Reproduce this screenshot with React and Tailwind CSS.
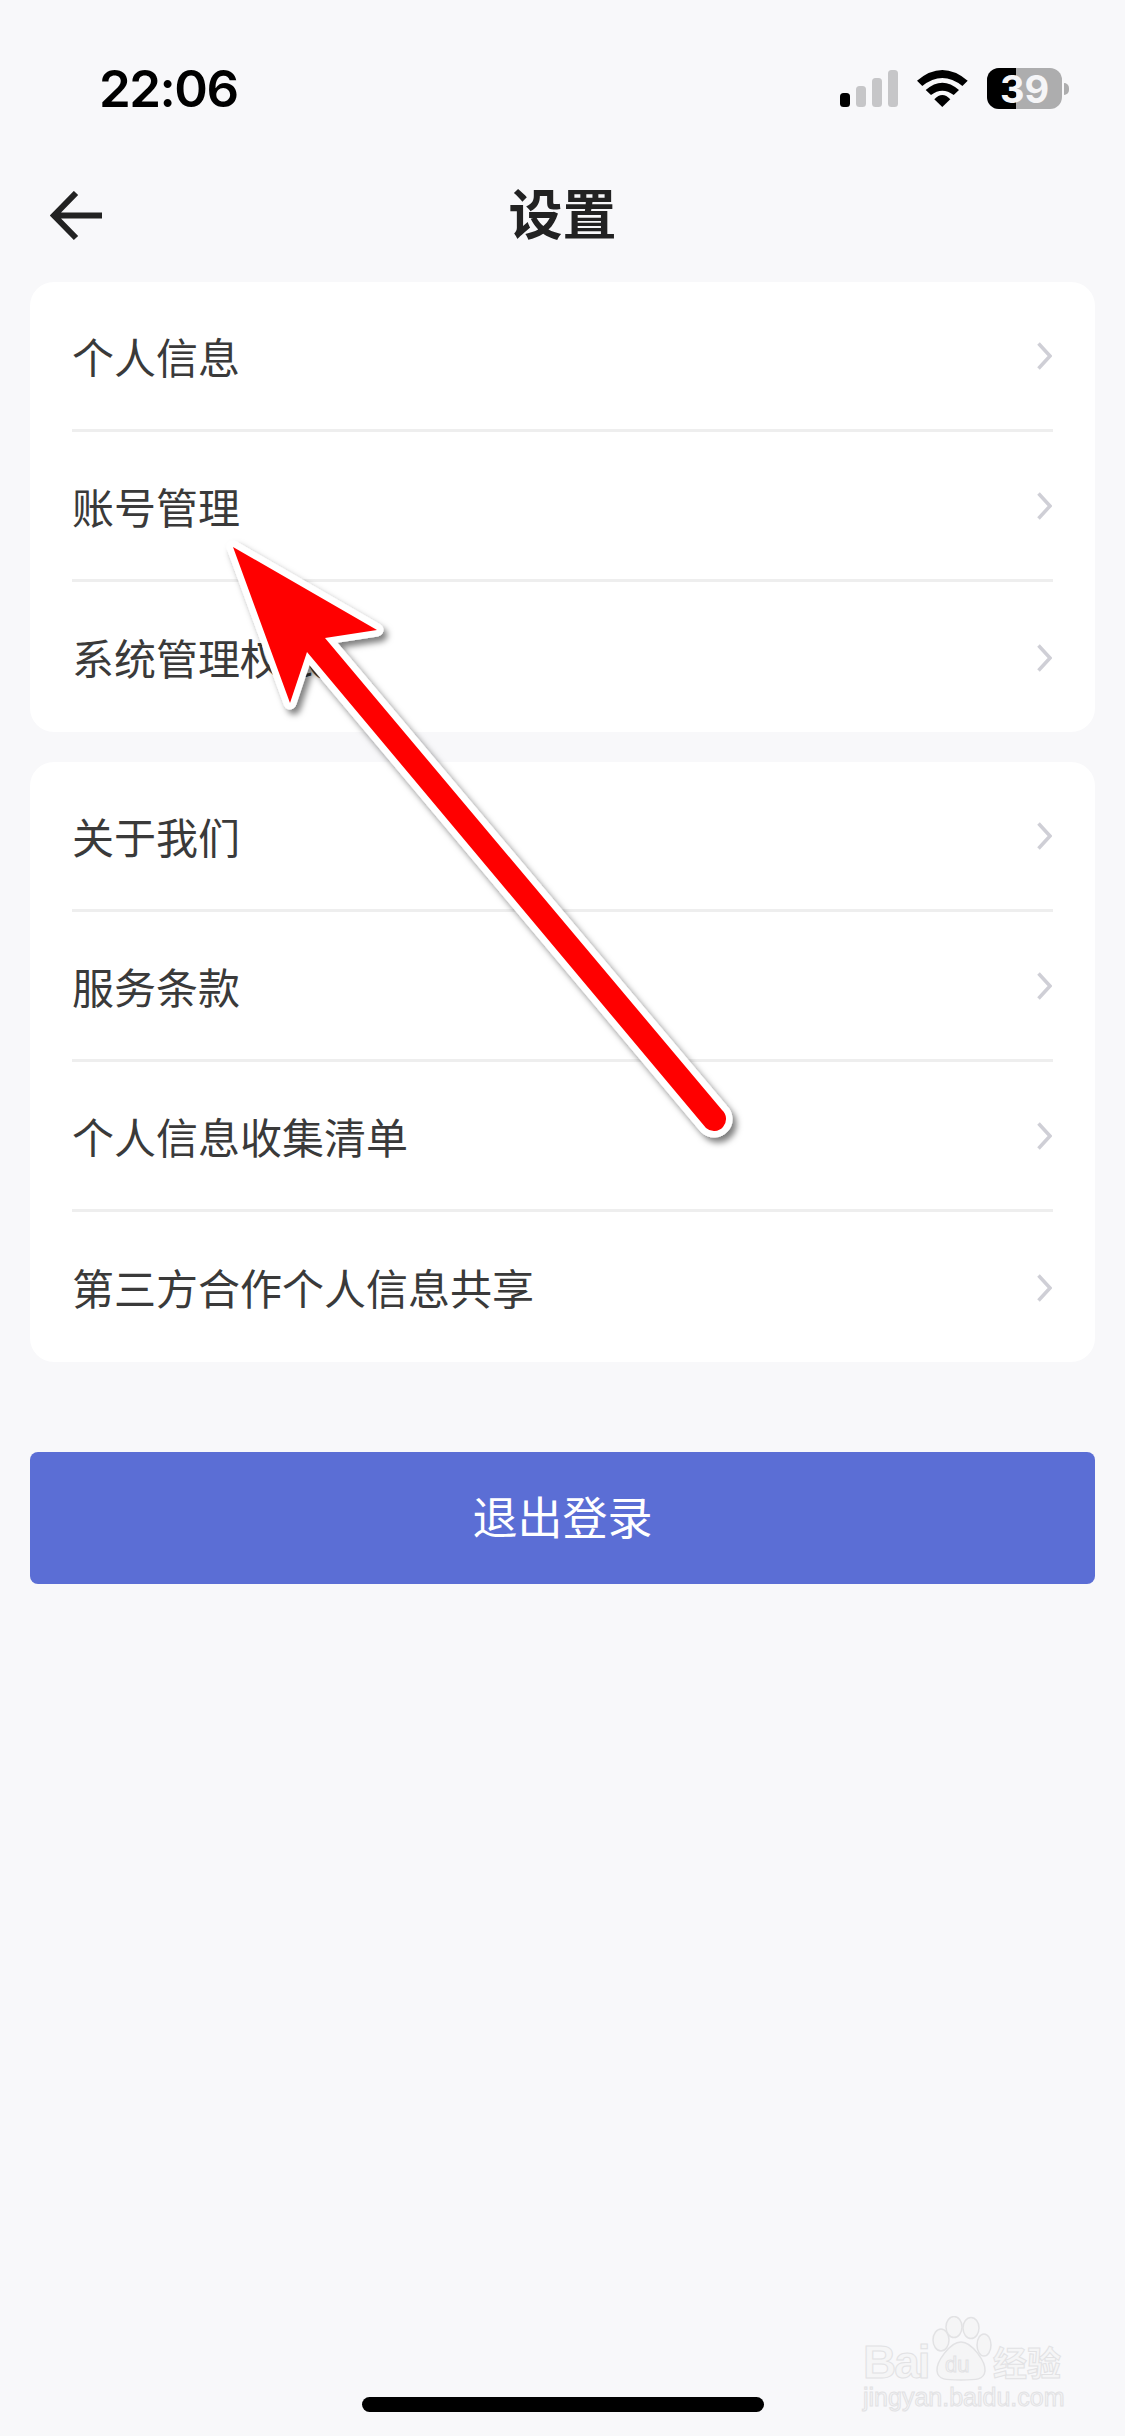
import React from "react";

const cjk = "font-['Noto_Sans_CJK_SC','Noto_Sans',sans-serif]";
const arrowPath = "M233 547 L377 630 L325 638 L722 1110 A11 11 0 0 1 706 1128 L307 652 L290 703 Z";

function Row({ label, last }) {
  return (
    <div className={"h-[150px] flex items-center justify-between " + (last ? "" : "border-b-[3px] border-[#eeeeee]")}>
      <span className="text-[42px] leading-none text-[#3a3a3a]">{label}</span>
      <svg className="mt-[1px] mr-[1px]" width="15" height="28" viewBox="0 0 15 28">
        <path d="M1.500 1.500 L13 14 L1.500 26.500" fill="none" stroke="#cfcfd6" strokeWidth="3.500" />
      </svg>
    </div>
  );
}

function Card({ items }) {
  return (
    <div className="bg-white rounded-[24px] px-[42px]">
      {items.map((t, i) => (
        <Row key={t} label={t} last={i === items.length - 1} />
      ))}
    </div>
  );
}

function StatusIcons() {
  return (
    <div className="flex items-center gap-[19px]">
      <svg width="58" height="37" viewBox="0 0 58 37">
        <rect x="0" y="23" width="10" height="14" rx="3.500" fill="#000" />
        <rect x="16" y="16" width="10" height="21" rx="3.500" fill="#c6c6c8" />
        <rect x="32" y="8" width="10" height="29" rx="3.500" fill="#c6c6c8" />
        <rect x="48" y="0" width="10" height="37" rx="3.500" fill="#c6c6c8" />
      </svg>
      <svg width="51" height="37" viewBox="0 0 51 37">
        <path d="M0 10.700 Q25.300 -10.700 50.700 10.700 L45.400 16 Q25.300 0 5.300 16 Z" fill="#000" />
        <path d="M8.700 20 Q25.300 5.300 42 20 L36.700 25 Q25.300 16.300 14 25 Z" fill="#000" />
        <path d="M17.300 29.300 Q25.300 20.700 33.300 29.300 L25.300 37 Z" fill="#000" />
      </svg>
      <div className="flex items-center gap-[2px]">
        <div className="relative w-[75px] h-[41px] rounded-[12px] bg-[#adadae]">
          <div className="w-[29px] h-full rounded-l-[12px] bg-black" />
          <span className="absolute inset-0 flex items-center justify-center text-[38px] font-bold leading-none text-[#f5f5f7] font-['Inter',sans-serif]">39</span>
        </div>
        <div className="w-[5px] h-[12px] rounded-r-full bg-[#adadae]" />
      </div>
    </div>
  );
}

// Annotation arrow laid over the settings list
function Arrow() {
  return (
    <svg className="absolute left-0 top-0 pointer-events-none" width="1125" height="1200" viewBox="0 0 1125 1200">
      <defs>
        <filter id="arrowShadow" x="-10%" y="-10%" width="130%" height="130%">
          <feDropShadow dx="4" dy="5" stdDeviation="3" floodColor="#000" floodOpacity="0.5" />
        </filter>
      </defs>
      <path d={arrowPath} fill="#ff0000" stroke="#ffffff" strokeWidth="13" strokeLinejoin="round" filter="url(#arrowShadow)" />
      <path d={arrowPath} fill="#ff0000" />
    </svg>
  );
}

function Watermark() {
  const outline = "[-webkit-text-stroke:1px_#e2e2e4] text-[#f5f5f6]";
  return (
    <div className="absolute left-[863px] top-[2316px] w-[210px] font-['Liberation_Sans',sans-serif] pointer-events-none">
      <div className="relative h-[69px]">
        <span className={"absolute left-0 top-[23px] text-[46px] leading-none font-bold tracking-[-2px] " + outline}>Bai</span>
        <svg className="absolute left-[69px] top-0" width="60" height="65" viewBox="0 0 60 65">
          <g fill="#f5f5f6" stroke="#e2e2e4" strokeWidth="1.500">
            <ellipse cx="9" cy="24" rx="8" ry="11" />
            <ellipse cx="22" cy="11" rx="8" ry="10.500" />
            <ellipse cx="39" cy="12" rx="8" ry="10.500" />
            <ellipse cx="52" cy="29" rx="7" ry="11" />
            <path d="M29 26 C40 26 54 46 53 55 C52 64 44 64 29 64 C14 64 6 64 5 55 C4 46 18 26 29 26 Z" />
          </g>
        </svg>
        <span className={"absolute left-[82px] top-[38px] text-[22px] leading-none " + outline}>du</span>
        <span className={"absolute left-[130px] top-[29px] text-[34px] leading-none font-bold font-['Noto_Sans_CJK_SC',sans-serif] " + outline}>经验</span>
      </div>
      <div className={"text-[25px] leading-none whitespace-nowrap " + outline}>jingyan.baidu.com</div>
    </div>
  );
}

export default function App() {
  return (
    <div className={"relative w-[1125px] h-[2436px] bg-[#f8f8fa] overflow-hidden " + cjk}>
      <div className="h-[180px] pt-[68px] pl-[99px] pr-[56px] flex justify-between items-start">
        <span className="text-[51px] leading-[41px] font-semibold tracking-[-1.500px] text-black font-['Inter',sans-serif]">22:06</span>
        <StatusIcons />
      </div>

      <div className="relative h-[102px] flex items-start justify-center">
        <svg className="absolute left-[50px] top-[11px]" width="54" height="50" viewBox="0 0 54 50">
          <path d="M52 24.500 H4 M26 2 L4 24.500 L26 47" fill="none" stroke="#222222" strokeWidth="6" />
        </svg>
        <h1 className="text-[54px] font-bold leading-none text-[#222222] mt-[5px]">设置</h1>
      </div>

      <div className="px-[30px] flex flex-col">
        <Card items={["个人信息", "账号管理", "系统管理权限"]} />
        <div className="h-[30px]" />
        <Card items={["关于我们", "服务条款", "个人信息收集清单", "第三方合作个人信息共享"]} />
        <button className="mt-[90px] h-[132px] rounded-[8px] bg-[#5b6ed5] text-white text-[45px] leading-none pb-[6px]">退出登录</button>
      </div>

      <div className="absolute left-[362px] bottom-[24px] w-[402px] h-[15px] rounded-full bg-black" />
      <Arrow />
      <Watermark />
    </div>
  );
}
